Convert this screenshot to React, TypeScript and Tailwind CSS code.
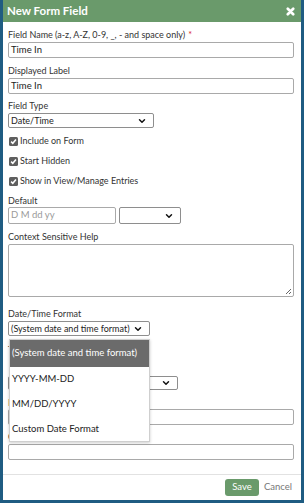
import { ChevronDown } from "lucide-react";

const font = { fontFamily: "Lato, 'Open Sans', sans-serif" };

function Label({ children, star, className = "" }: { children: React.ReactNode; star?: boolean; className?: string }) {
  return (
    <div className={`text-[9px] leading-[11px] text-[#333] ${className}`}>
      {children}
      {star && <span className="text-[#d9262c] ml-[3px]">*</span>}
    </div>
  );
}

function TextBox({ value, placeholder, className = "" }: { value?: string; placeholder?: string; className?: string }) {
  return (
    <div className={`border border-[#a9a9a9] rounded-[2px] px-[2px] flex items-center text-[9.5px] ${className}`}>
      {value ? <span className="text-[#222]">{value}</span> : <span className="text-[#9a9a9a]">{placeholder}</span>}
    </div>
  );
}

function SelectBox({ value, className = "" }: { value?: string; className?: string }) {
  return (
    <div className={`border border-[#8e8e8e] rounded-[2px] pl-[2px] pr-[6px] flex items-center justify-between text-[9px] text-[#222] ${className}`}>
      <span>{value}</span>
      <ChevronDown size={10} strokeWidth={3.5} className="text-[#111]" />
    </div>
  );
}

function Check({ label }: { label: string }) {
  return (
    <div className="flex items-center gap-[2px] text-[9px] text-[#333] h-[20px] pl-[1px]">
      <span className="w-[9px] h-[9px] rounded-[1.5px] bg-[#5f5f5f] flex items-center justify-center">
        <svg width="7" height="7" viewBox="0 0 8 8">
          <path d="M1.3 4.2 L3.2 6 L6.8 1.8" stroke="white" strokeWidth="1.8" fill="none" />
        </svg>
      </span>
      <span>{label}</span>
    </div>
  );
}

export default function App() {
  return (
    <div style={font} className="w-[304px] h-[503px] bg-[#1f5c82] px-[3px] pb-[3px] flex flex-col">
      <div className="flex-1 bg-white flex flex-col relative overflow-hidden">
        {/* header */}
        <div className="h-[22px] bg-[#6a9a6b] flex items-center justify-between pl-[4px] pr-[6px] shrink-0">
          <span className="text-white font-bold text-[11.5px]">New Form Field</span>
          <svg width="9" height="9" viewBox="0 0 10 10">
            <path d="M2 2 L8 8 M8 2 L2 8" stroke="white" strokeWidth="3" strokeLinecap="round" />
          </svg>
        </div>

        <div className="flex-1 pl-[5px] pr-[7px] pt-[7px] flex flex-col">
          <Label star className="mb-[2px]">Field Name (a-z, A-Z, 0-9, _, - and space only)</Label>
          <TextBox value="Time In" className="h-[16px]" />

          <Label className="mt-[7px] mb-[2px]">Displayed Label</Label>
          <TextBox value="Time In" className="h-[16px]" />

          <Label className="mt-[6px] mb-[2px]">Field Type</Label>
          <SelectBox value="Date/Time" className="w-[146px] h-[15px]" />

          <div className="mt-[3px] flex flex-col">
            <Check label="Include on Form" />
            <Check label="Start Hidden" />
            <Check label="Show in View/Manage Entries" />
          </div>

          <Label className="mt-[4px] mb-[1px]">Default</Label>
          <div className="flex gap-[3px]">
            <TextBox placeholder="D M dd yy" className="w-[108px] h-[17px]" />
            <SelectBox className="w-[62px] h-[17px]" />
          </div>

          <Label className="mt-[7px] mb-[2px]">Context Sensitive Help</Label>
          <div className="h-[53px] border border-[#a9a9a9] rounded-[2px] relative">
            <svg className="absolute right-[2px] bottom-[2px]" width="6" height="6" viewBox="0 0 6 6">
              <path d="M1 6 L6 1 M4 6 L6 4" stroke="#555" strokeWidth="0.9" />
            </svg>
          </div>

          <Label className="mt-[11px] mb-[2px]">Date/Time Format</Label>
          <SelectBox value="(System date and time format)" className="w-[142px] h-[15px]" />

          <Label className="mt-[8px] mb-[21px]">Time Format</Label>
          <SelectBox value="" className="w-[170px] h-[14px]" />

          <Label className="mt-[7px] mb-[1px]">Placeholder</Label>
          <TextBox className="h-[16px]" />

          <Label className="mt-[6px] mb-[2px]">CSS Classes</Label>
          <TextBox className="h-[16px]" />
        </div>

        {/* footer */}
        <div className="border-t border-[#e2e2e2] h-[26px] shrink-0 flex items-center justify-end gap-[5px] pr-[9px]">
          <span className="bg-[#6a9a6b] text-white text-[9.5px] rounded-[3px] w-[34px] h-[17px] flex items-center justify-center">Save</span>
          <span className="text-[#777] text-[9.5px]">Cancel</span>
        </div>

        {/* open dropdown list */}
        <div className="absolute left-[6px] top-[339px] w-[141px] bg-white border border-[#cfcfcf] shadow-[0_1px_3px_rgba(0,0,0,0.2)] text-[9.5px] text-[#222]">
          <div className="h-[27px] bg-[#6b6b6b] text-white flex items-center pl-[2px]">(System date and time format)</div>
          <div className="h-[25px] flex items-center pl-[2px]">YYYY-MM-DD</div>
          <div className="h-[25px] flex items-center pl-[2px]">MM/DD/YYYY</div>
          <div className="h-[24px] flex items-center pl-[2px]">Custom Date Format</div>
        </div>
      </div>
    </div>
  );
}
